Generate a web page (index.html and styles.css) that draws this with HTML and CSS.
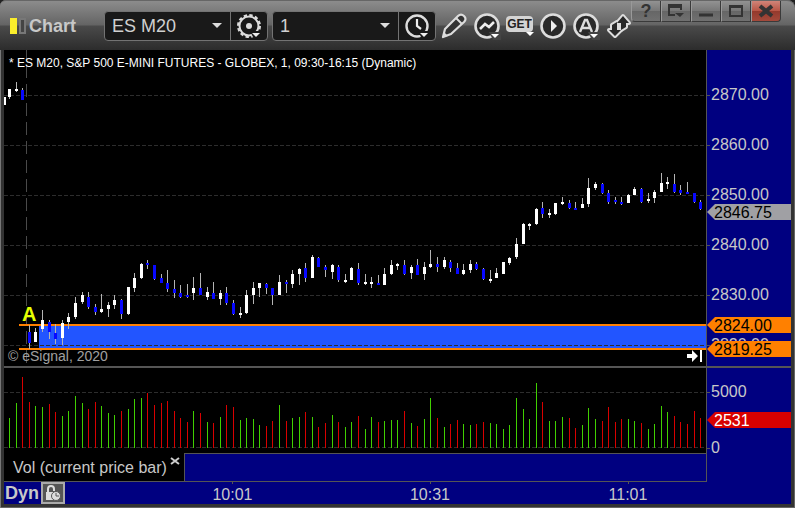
FILE: index.html
```html
<!DOCTYPE html>
<html lang="en">
<head>
<meta charset="utf-8">
<title>Chart</title>
<link rel="stylesheet" href="styles.css">
</head>
<body>
<div class="window">
  <header class="titlebar">
    <svg class="logo" width="17" height="16" aria-hidden="true"><rect width="7" height="16" fill="#fbee2c"/><rect x="10" y="1" width="5" height="14" fill="#444" stroke="#777" stroke-width="2"/></svg>
    <h1 class="title">Chart</h1>
    <div class="combo">
      <div class="picker">
        <select aria-label="Symbol"><option>ES M20</option></select>
        <svg class="caret" width="10" height="5" aria-hidden="true"><path d="M0 0h10L5 5z" fill="#ddd"/></svg>
      </div>
      <button class="combo-button" aria-label="Symbol settings">
        <svg width="26" height="26" viewBox="0 0 26 26"><circle cx="13" cy="13" r="9.5" fill="none" stroke="#ddd" stroke-width="2"/><circle cx="13" cy="13" r="11" fill="none" stroke="#ddd" stroke-width="2" stroke-dasharray="3.4 2.36"/><circle cx="13" cy="13" r="3" fill="#ddd"/><path d="M14 18h12v8h-8z" fill="#191919"/><path d="M16 20h8l-4 4z" fill="#eee"/></svg>
      </button>
    </div>
    <div class="combo">
      <div class="picker">
        <select aria-label="Interval"><option>1</option></select>
        <svg class="caret" width="10" height="5" aria-hidden="true"><path d="M0 0h10L5 5z" fill="#ddd"/></svg>
      </div>
      <button class="combo-button" aria-label="Time template">
        <svg width="26" height="26" viewBox="0 0 26 26"><circle cx="13" cy="13" r="10.5" fill="none" stroke="#ddd" stroke-width="2.4"/><path d="M13 6v7l4 3" fill="none" stroke="#eee" stroke-width="2.2"/><path d="M14 18h12v8h-8z" fill="#191919"/><path d="M16 20h8l-4 4z" fill="#eee"/></svg>
      </button>
    </div>
    <nav class="tools" aria-label="Chart tools">
      <button class="tool" aria-label="Draw"><svg width="28" height="28" viewBox="0 0 28 28"><path d="M3 25l2-8L18 4q3-3 6 0t0 6L11 22z" fill="#333" stroke="#ddd" stroke-width="2.2" stroke-linejoin="round"/><path d="M16 6l6 6" stroke="#ddd" stroke-width="2"/><path d="M3 25l1-5 4 4z" fill="#ddd"/></svg></button>
      <button class="tool" aria-label="Studies"><svg width="28" height="28" viewBox="0 0 28 28"><circle cx="14" cy="14" r="11.5" fill="#292929" stroke="#ddd" stroke-width="2.6"/><path d="M7 17l5-5 4 3 5-5" fill="none" stroke="#eee" stroke-width="2.6"/><path d="M16 20h12v8h-8z" fill="#444"/><path d="M18 22h8l-4 4z" fill="#fff"/></svg></button>
      <button class="tool" aria-label="Get"><span class="get">GET</span><svg class="get-caret" width="8" height="4"><path d="M0 0h8L4 4z" fill="#fff"/></svg></button>
      <button class="tool" aria-label="Play"><svg width="28" height="28" viewBox="0 0 28 28"><circle cx="14" cy="14" r="11.5" fill="#292929" stroke="#ddd" stroke-width="2.6"/><path d="M12 8l6 6-6 6z" fill="#eee"/></svg></button>
      <button class="tool" aria-label="Alerts"><svg width="28" height="28" viewBox="0 0 28 28"><circle cx="14" cy="14" r="11.5" fill="#292929" stroke="#ddd" stroke-width="2.6"/><path d="M8 20l5-12h2l5 12M10 16h8" fill="none" stroke="#ddd" stroke-width="2.4"/><path d="M16 20h12v8h-8z" fill="#444"/><path d="M18 22h8l-4 4z" fill="#fff"/></svg></button>
      <button class="tool" aria-label="Link"><svg width="28" height="28" viewBox="0 0 28 28"><g stroke="#ddd" stroke-width="4" stroke-linejoin="round"><path id="up" d="M18 4l6 7h-3v4l-5 3v-7h-4z"/><path id="down" d="M10 24l-6-6h3v-5l5-3v8h4z"/></g><path d="M18 4l6 7h-3v4l-5 3v-7h-4zM10 24l-6-6h3v-5l5-3v8h4z" fill="#292929"/></svg></button>
    </nav>
    <div class="controls">
      <button class="control" aria-label="Help"><span class="help">?</span></button>
      <button class="control" aria-label="Detach"><svg width="16" height="14"><path d="M7 11H1V1h12v5M1 3h12" fill="none" stroke="#333" stroke-width="2"/><path d="M7 9h9l-4 4z" fill="#333"/></svg></button>
      <button class="control" aria-label="Minimize"><svg width="16" height="14"><path d="M1 11h14" stroke="#333" stroke-width="3"/></svg></button>
      <button class="control" aria-label="Maximize"><svg width="16" height="14"><path d="M2 2h12v10H2zM2 3h12" fill="none" stroke="#333" stroke-width="2"/></svg></button>
      <button class="control close" aria-label="Close"><svg width="16" height="14"><path d="M2 2l12 10M14 2L2 12" stroke="#333" stroke-width="4"/></svg></button>
    </div>
  </header>

  <main class="workspace">
    <section class="plot price-plot" aria-label="Price">
      <svg class="canvas" id="price" viewBox="4 50 702 316" preserveAspectRatio="none" shape-rendering="crispEdges">
        <path d="M26.5 50V366" stroke="#4a4a4a" stroke-dasharray="13 6" stroke-dashoffset="4"/>
        <path class="gridline" d="M4 95.5H706M4 145.5H706M4 195.5H706M4 245.5H706M4 295.5H706"/>
        <rect x="39" y="325" width="667" height="23" fill="#2255ff"/>
        <path class="gridline" d="M4 345.5H706"/>
        <path d="M19 325H706M19 349H706" stroke="#ff8000" stroke-width="2"/>
      </svg>
      <p class="legend">* ES M20, S&amp;P 500 E-MINI FUTURES - GLOBEX, 1, 09:30-16:15 (Dynamic)</p>
      <span class="marker">A</span>
      <p class="copyright">© eSignal, 2020</p>
      <button class="jump" aria-label="Go to latest"><svg width="16" height="14"><path d="M0 5h5V1l6 6-6 6V9H0z" fill="#fff"/><path d="M14 1v12" stroke="#fff" stroke-width="2"/></svg></button>
    </section>
    <aside class="axis price-axis" aria-label="Price scale">
      <span>2870.00</span><span>2860.00</span><span>2850.00</span><span>2840.00</span><span>2830.00</span><span>2820.00</span>
      <b class="tag last">2846.75</b>
      <b class="tag upper">2824.00</b>
      <b class="tag lower">2819.25</b>
    </aside>
    <div class="splitter"></div>
    <section class="plot volume-plot" aria-label="Volume">
      <svg class="canvas" id="volume" viewBox="4 368 702 85" preserveAspectRatio="none" shape-rendering="crispEdges">
        <path class="gridline" d="M4 392.5H706M4 447.5H706"/>
      </svg>
    </section>
    <aside class="axis volume-axis" aria-label="Volume scale">
      <span>5000</span><span>0</span>
      <b class="tag volume-tag">2531</b>
    </aside>
    <div class="tabs">
      <div class="tab"><span>Vol (current price bar)</span><button class="tab-close" aria-label="Close study"><svg width="10" height="8"><path d="M1 1l8 6M9 1L1 7" stroke="#ccc" stroke-width="2"/></svg></button></div>
      <div class="tab-rest"></div>
    </div>
    <footer class="timebar">
      <div class="mode"><strong>Dyn</strong><button class="lock" aria-label="Lock time"><svg width="18" height="18"><path d="M4 9V5q0-3 3-3t3 3v2" fill="none" stroke="#ddd" stroke-width="2"/><path d="M2 8h8v8H2z" fill="#ddd"/><circle cx="12" cy="12" r="4.5" fill="#ddd" stroke="#555"/><path d="M12 9v3h3" fill="none" stroke="#555"/></svg></button></div>
      <time>10:01</time><time>10:31</time><time>11:01</time>
    </footer>
  </main>
</div>
<script src="chart.js"></script>
</body>
</html>
```

FILE: styles.css
```css
* { box-sizing: border-box; }
body {
  margin: 0;
  background: #222;
  color: #c8c8c8;
  font: 16px/20px "Liberation Sans", Arial, sans-serif;
}
h1, p { margin: 0; }
button { padding: 0; border: 0; background: none; color: inherit; font: inherit; }
svg { display: block; flex: none; }

.window {
  min-height: 100vh;
  display: flex;
  flex-direction: column;
  padding: 0 4px 4px;
  background: #333;
  border-radius: 6px 8px 0 0;
  box-shadow: inset 1px 1px #777, inset -1px -1px #666;
}

/* Title bar */
.titlebar {
  height: 50px;
  margin: 0 -4px;
  padding: 0 14px 0 10px;
  display: flex;
  align-items: center;
  background: linear-gradient(#8c8c8c, #646464 24px, #4a4a4a 25px, #2c2c2c);
  border-top: 1px solid #666;
  border-radius: 6px 8px 0 0;
}
.title { margin: 0 28px 0 2px; font-size: 18px; line-height: 24px; }
.combo {
  height: 30px;
  margin-right: 4px;
  display: flex;
  flex: none;
  background: #191919;
  border: 1px solid #737373;
  border-radius: 4px;
}
.picker { position: relative; width: 125px; }
.picker select {
  width: 100%;
  height: 100%;
  padding: 0 24px 0 7px;
  appearance: none;
  border: 0;
  background: none;
  color: #d0d0d0;
  font: 18px/24px "Liberation Sans", Arial, sans-serif;
}
.caret { position: absolute; right: 8px; top: 11px; pointer-events: none; }
.combo-button {
  width: 37px;
  display: grid;
  place-items: center;
  border-left: 1px solid #737373;
}
.tools { display: flex; flex: none; margin: 0 -8px 0 -3px; }
.tool { width: 33px; display: flex; flex-direction: column; align-items: center; justify-content: center; }
.get {
  padding: 0 1px;
  background: #d4d4d4;
  border-radius: 4px;
  color: #222;
  font: bold 12px/16px "Liberation Sans", Arial, sans-serif;
}
.get-caret { align-self: flex-end; margin-right: 2px; }
.controls { display: flex; flex: none; align-self: flex-start; margin-left: auto; }
.control {
  width: 30px;
  height: 21px;
  display: grid;
  place-items: center;
  background: linear-gradient(#929292, #777 50%, #666 51%, #707070);
  border: 1px solid #3a3a3a;
  border-top: 0;
  border-left-color: #999;
}
.control:first-child { border-radius: 0 0 0 4px; }
.close { background: linear-gradient(#d08478, #b85545 50%, #94392c 51%, #a34a3c); border-radius: 0 0 4px 0; }
.help { color: #333; font-size: 18px; font-weight: bold; }

/* Chart area */
.workspace {
  flex: 1;
  display: grid;
  grid-template-columns: minmax(0, 1fr) 85px;
  grid-template-rows: auto 2px auto auto 1fr;
  background: #000080;
}
.plot { position: relative; background: #000; }
.canvas { width: 100%; }
.price-plot .canvas { height: 316px; }
.volume-plot .canvas { height: 85px; }
.gridline { stroke: #2d2d2d; stroke-dasharray: 4 2; }
.legend { position: absolute; left: 5px; top: 4px; color: #fff; font-size: 12px; line-height: 18px; }
.marker { position: absolute; left: 18px; top: 254px; color: #e6ff00; font-size: 20px; font-weight: bold; }
.copyright { position: absolute; left: 4px; bottom: 0; color: #a0a0a0; font-size: 14px; }
.jump { position: absolute; right: 3px; bottom: 3px; }

.axis {
  position: relative;
  display: flex;
  flex-direction: column;
  border-left: 1px solid #555;
}
.axis span { display: flex; align-items: center; height: 50px; flex: none; }
.axis span::before { content: ""; width: 3px; height: 1px; margin-right: 1px; background: #555; }
.price-axis { height: 316px; padding-top: 20px; overflow: hidden; }
.volume-axis { height: 85px; }
.volume-axis span { height: 56px; }
.volume-axis span:first-child { margin-top: -4px; }
.tag {
  position: absolute;
  left: 0;
  right: 0;
  height: 16px;
  padding-left: 7px;
  clip-path: polygon(0 50%, 8px 0, 100% 0, 100% 100%, 8px 100%);
  color: #000;
  font-weight: normal;
  line-height: 17px;
}
.last { top: 154px; background: #a0a0a4; }
.upper { top: 267px; background: #ff8000; }
.lower { top: 291px; background: #ff8000; }
.volume-tag { top: 44px; background: #d80000; color: #fff; }

.splitter { grid-column: 1 / -1; background: #555; }

.tabs { display: flex; height: 29px; border-bottom: 1px solid #555; border-right: 1px solid #555; margin-right: -1px; }
.tab { display: flex; align-items: flex-start; width: 180px; padding: 5px 4px 0 9px; background: #000; white-space: nowrap; }
.tab-close { margin: -1px 0 0 auto; }
.tab-rest { flex: 1; border-top: 1px solid #555; border-left: 1px solid #555; }

.timebar {
  grid-column: 1 / 2;
  grid-row: 5;
  display: grid;
  grid-template-columns: 130fr 197fr 198fr 198fr;
  margin-right: -21px;
}
.mode { display: flex; padding-left: 1px; gap: 2px; }
.mode strong { font-size: 18px; line-height: 22px; }
.lock { width: 24px; height: 22px; display: grid; place-items: center; background: #555; border: 2px solid #aaa; }
.lock svg { margin: -1px; }
time {
  padding-top: 4px;
  background: linear-gradient(#555, #555) top / 1px 2px no-repeat;
  line-height: 18px;
  text-align: center;
}
```

FILE: chart.js
```js
// One row per bar: x, high, low, body top, body bottom, rising (1) or falling (0)
const bars = `4 97 105 97 105 1|9 89 99 89 97 1|16 82 92 89 91 1|22 88 100 90 100 0
29 325 349 332 343 0|35 328 342 332 342 1|42 310 332 320 329 1|49 320 339 322 332 0|55 324 344 333 339 0
62 320 345 323 338 1|68 313 329 317 322 1|75 297 319 303 317 1|82 292 304 295 302 1|88 292 309 297 307 0
95 304 315 307 312 0|101 294 313 309 312 1|108 302 317 305 309 1|114 295 309 300 305 1|121 299 319 300 314 0
128 287 315 287 314 1|134 273 292 278 288 1|141 263 279 264 278 1|147 260 269 263 265 0|154 265 280 265 279 0
161 274 283 278 283 0|167 270 292 283 289 0|174 280 298 289 293 0|180 285 298 293 297 0|187 284 298 295 297 0
193 277 300 288 293 1|200 273 295 288 295 0|207 287 300 292 297 1|213 282 299 293 299 0|220 290 305 293 299 1
226 287 305 293 303 0|233 300 315 303 314 0|240 307 318 313 315 1|246 290 314 295 313 1|253 282 304 288 295 1
259 283 297 283 288 1|266 283 294 284 288 0|272 288 305 288 295 0|279 275 295 282 295 1|286 280 293 282 284 0
292 270 288 274 284 1|299 268 285 269 274 1|305 263 282 268 278 0|312 255 278 257 278 1|318 257 267 258 267 0
325 265 277 267 270 0|332 264 279 265 272 1|338 265 282 267 280 0|345 274 283 280 282 1|351 267 280 268 280 1
358 263 285 269 283 0|365 274 285 282 284 1|371 277 288 282 284 1|378 275 285 283 285 0|384 268 285 274 285 1
391 260 275 265 274 1|397 263 270 264 266 1|404 260 275 265 274 0|411 265 279 267 273 1|417 259 275 265 275 0
424 262 280 267 274 1|430 250 268 264 267 1|437 257 272 264 267 0|444 257 269 260 267 1|450 260 272 262 268 0
457 263 274 268 274 0|463 264 275 270 274 1|470 260 273 264 270 1|476 262 270 264 269 0|483 268 280 269 279 0
490 270 283 279 281 1|496 268 278 273 278 1|503 262 274 262 274 1|509 257 265 258 263 1|516 238 259 244 257 1
523 223 244 224 244 1|529 223 230 224 226 1|536 208 225 209 224 1|542 202 218 208 214 0|549 209 218 213 215 1
555 203 215 203 214 1|562 197 205 202 204 1|569 200 209 203 208 0|575 202 210 208 210 0|582 198 208 204 208 1
588 178 207 188 204 1|595 182 190 184 188 1|602 183 194 184 193 0|608 190 204 193 202 0|615 197 204 200 202 0
621 197 205 202 204 0|628 194 203 195 203 1|634 187 195 189 195 1|641 188 203 189 202 0|648 193 203 199 201 1
654 190 203 192 198 1|661 173 192 183 192 1|667 177 189 182 184 1|674 174 193 184 192 0|680 185 195 190 193 0
687 182 194 192 194 0|694 193 203 193 202 0|700 200 210 202 209 0`;

// Volume bar tops, g for up and r for down, starting with the second price bar
const volumes = `g418 g403 r377 r402 g406 g407 r404 r412 g416 g411 g396 g403 r409 r402 g406 g413 g415 r411 g409 g399 g398
r393 r405 r403 r401 r411 r418 r422 g411 r413 g422 r423 g417 r405 r407 g420 g418 g419 g425 r426 r421 g405 r421 g418 g417
r412 g417 r427 r423 g415 r422 g427 g422 r416 g429 g417 r422 g421 g420 g420 r411 g423 r426 g419 g398 r418 g427 r424 r420
g424 g425 r424 r422 g423 g424 g429 g425 g398 g409 g419 g383 r402 g421 g421 g417 r418 r428 g425 g408 g419 r421 r407 r422
r419 g419 g421 r423 g429 g424 g406 g412 r416 r422 r424 r411 r418`;

function addRect(svg, x, top, width, bottom, fill) {
  const rect = document.createElementNS("http://www.w3.org/2000/svg", "rect");
  const attributes = { x, y: top, width, height: bottom - top, fill };
  for (const name in attributes) rect.setAttribute(name, attributes[name]);
  svg.append(rect);
}

const price = document.getElementById("price");
const volume = document.getElementById("volume");
const rows = bars.split(/[|\n]/).map(row => row.split(" ").map(Number));

for (const [x, high, low, top, bottom, rising] of rows) {
  addRect(price, x, high, 1, low, "#b4b4b4");
  addRect(price, x - 1, top, 3, bottom, rising ? "#fff" : "#0808ff");
}
volumes.split(/\s+/).forEach((item, i) => {
  addRect(volume, rows[i + 1][0], Number(item.slice(1)), 1, 448, item[0] === "g" ? "#40d000" : "#d80000");
});
```
